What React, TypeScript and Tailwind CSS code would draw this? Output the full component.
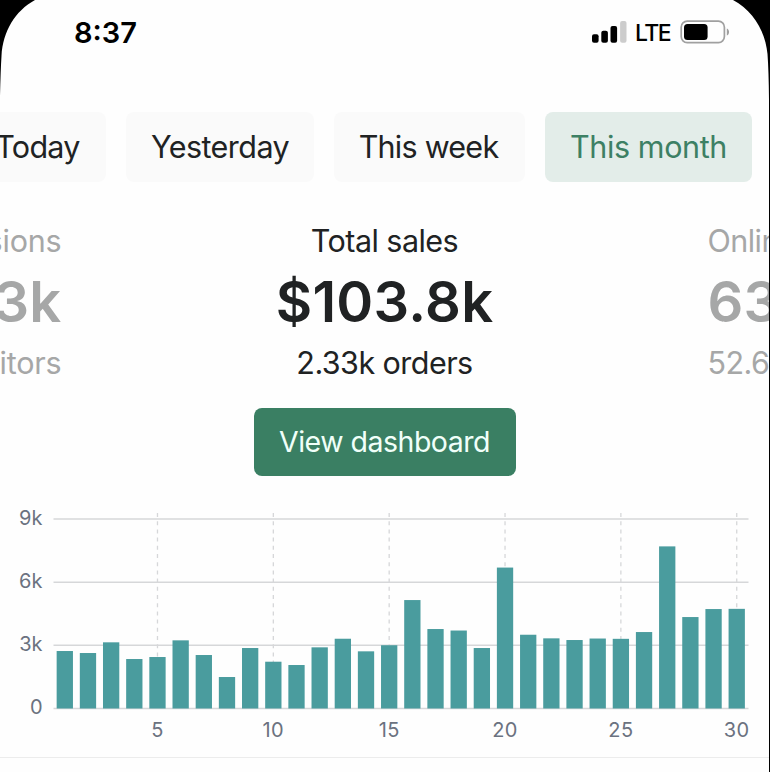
import React from 'react'
import clsx from 'clsx'

const ranges = [
  { label: 'Today', className: 'w-[132px] pr-[5px] tracking-[-0.7px]' },
  { label: 'Yesterday', className: 'w-[188px] tracking-[-0.55px]' },
  { label: 'This week', className: 'w-[191px] pr-[2px] tracking-[-0.75px]' },
  { label: 'This month', className: 'w-[207px] tracking-[-0.4px]', active: true },
]

const dailySales = [
  2730, 2635, 3143, 2350, 2445, 3237, 2540, 1495, 2872, 2222,
  2065, 2905, 3313, 2715, 3005, 5150, 3774, 3703, 2872, 6693,
  3503, 3332, 3252, 3323, 3309, 3631, 7699, 4343, 4723, 4733,
]

const yTicks = [
  { value: 9000, label: '9k' },
  { value: 6000, label: '6k' },
  { value: 3000, label: '3k' },
  { value: 0, label: '0' },
]

const xTicks = [5, 10, 15, 20, 25, 30]

const BASELINE = 201.5
const BAR_WIDTH = 16.3

const barCenter = (day: number) => 64.8 + (day - 1) * 23.17
const toY = (value: number) => BASELINE - (value / 3000) * 63.17

const StatusBar = () => (
  <div className="h-[112px] flex items-start justify-between pl-[74px] pr-[39px] pt-[16px]">
    <span className="text-[29px] leading-[33px] font-semibold text-black">8:37</span>
    <div className="flex items-center h-[32px] text-black">
      <svg className="w-[36px] h-[24px]" viewBox="0 0 36 24" fill="currentColor">
        <rect x="0" y="14.2" width="6.6" height="8.6" rx="2" />
        <rect x="9.3" y="10.8" width="6.6" height="12" rx="2" />
        <rect x="18.5" y="6" width="6.6" height="16.8" rx="2" />
        <rect x="28.1" y="1" width="6.4" height="21.8" rx="2" fill="#cccccc" />
      </svg>
      <span className="ml-[7px] w-[45px] text-[23px] leading-[32px] pt-[2px] font-medium tracking-[-1.6px]">LTE</span>
      <svg className="w-[50px] h-[24px]" viewBox="0 0 50 24">
        <rect x="1.2" y="1.2" width="43.2" height="21.4" rx="6" fill="none" stroke="#a0a0a0" strokeWidth="1.7" />
        <rect x="4" y="4" width="23.6" height="16" rx="3.5" fill="#000" />
        <path d="M46.8 8.4c3 1 3 6 0 7z" fill="#a0a0a0" />
      </svg>
    </div>
  </div>
)

const RangeTabs = () => (
  <div className="h-[70px] flex justify-end gap-5 pr-[17px]">
    {ranges.map((range) => (
      <button
        key={range.label}
        className={clsx(
          'h-[70px] shrink-0 rounded-lg text-[30.5px] leading-[36px] whitespace-nowrap',
          range.className,
          range.active ? 'bg-[#e3ede9] text-[#3d8064]' : 'bg-[#fafafa] text-[#202223]',
        )}
      >
        {range.label}
      </button>
    ))}
  </div>
)

const Metric = ({ title, value, detail, className }: { title: string; value: string; detail: string; className: string }) => (
  <div className={clsx('shrink-0 whitespace-nowrap text-[30.5px] leading-[36px]', className)}>
    <div>{title}</div>
    <div className="h-[86px] leading-[86px] text-[56px] font-semibold tracking-[0.3px]">{value}</div>
    <div>{detail}</div>
  </div>
)

const Metrics = () => (
  <div className="mt-[41px] h-[158px] flex justify-center gap-[80px] overflow-hidden">
    <Metric title="Sessions" value="63.3k" detail="Visitors" className="w-[244px] tracking-[-0.2px] text-right text-[#a6a7a7]" />
    <Metric title="Total sales" value="$103.8k" detail="2.33k orders" className="w-[486px] tracking-[-0.55px] text-center text-[#202223]" />
    <Metric title="Online store" value="63.3k" detail="52.6k visitors" className="w-[244px] tracking-[-0.55px] text-left text-[#a6a7a7]" />
  </div>
)

const SalesChart = () => (
  <svg className="block w-[770px] h-[250px]" viewBox="0 0 770 250">
    {yTicks.map((tick) => (
      <line key={tick.value} x1="53.5" x2="748.5" y1={toY(tick.value)} y2={toY(tick.value)} stroke="#d6d7d9" strokeWidth="1.5" />
    ))}
    {xTicks.map((day) => (
      <line key={day} x1={barCenter(day)} x2={barCenter(day)} y1="6" y2={BASELINE} stroke="#d6d7d9" strokeWidth="1.3" strokeDasharray="4 4.2" />
    ))}
    {dailySales.map((value, i) => (
      <rect
        key={i}
        x={barCenter(i + 1) - BAR_WIDTH / 2}
        y={toY(value)}
        width={BAR_WIDTH}
        height={BASELINE - toY(value)}
        fill="#4a9c9e"
      />
    ))}
    {yTicks.map((tick) => (
      <text key={tick.label} x="42.5" y={toY(tick.value) + 5.5} textAnchor="end" fontSize="20" fill="#6b7280">
        {tick.label}
      </text>
    ))}
    {xTicks.map((day) => (
      <text key={day} x={barCenter(day)} y="229.5" textAnchor="middle" fontSize="20" letterSpacing="0.4" fill="#6b7280">
        {day}
      </text>
    ))}
  </svg>
)

// Rounded black bezel in the top corners
const Bezel = () => (
  <svg className="absolute left-0 top-0 w-[770px] h-[100px] pointer-events-none" viewBox="0 0 770 100">
    <path d="M0 0H35C15 11 3 31 1.5 56Q0.6 70 0 96Z" fill="#000" />
    <path d="M770 0H733C753 11 765 30 767.5 54Q768.7 70 769 100H770Z" fill="#000" />
  </svg>
)

const App = () => (
  <div className="relative w-[770px] h-[772px] overflow-hidden bg-[#fefefe] border-r border-black font-['Inter',sans-serif]">
    <StatusBar />
    <RangeTabs />
    <Metrics />
    <div className="mt-[27px] flex justify-center">
      <button className="w-[262px] h-[68px] rounded-lg bg-[#3a7f63] text-[#f0fff9] text-[28.5px] leading-[36px] tracking-[-0.5px] whitespace-nowrap">
        View dashboard
      </button>
    </div>
    <div className="mt-[31px] h-[250px]">
      <SalesChart />
    </div>
    <div className="h-[15px] border-t border-[#ececec]" />
    <Bezel />
  </div>
)

export default App
